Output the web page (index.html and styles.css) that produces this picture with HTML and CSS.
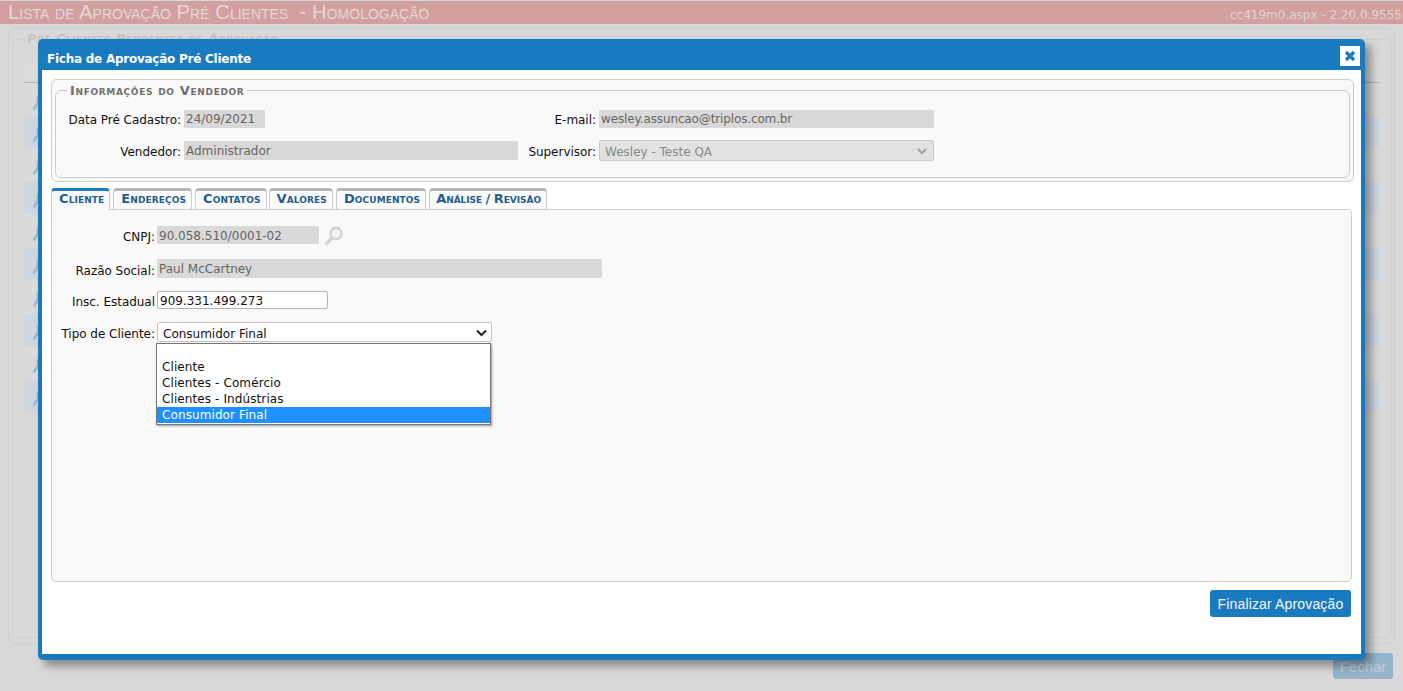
FILE: index.html
```html
<!DOCTYPE html>
<html lang="pt-BR">
<head>
<meta charset="utf-8">
<title>Lista de Aprovação Pré Clientes</title>
<link rel="stylesheet" href="styles.css">
</head>
<body>
<header class="top">
  <h1 class="top-title">Lista de Aprovação Pré Clientes &nbsp;- Homologação</h1>
  <span class="top-ver">cc419m0.aspx - 2.20.0.9555</span>
</header>
<main class="bg">
  <div class="bg-outer">
    <fieldset class="bg-inner">
      <legend class="bg-legend">Pré Clientes Pendentes de Aprovação</legend>
      <div class="bg-head"></div>
      <div class="bg-rows">
        <div class="bg-row"><svg class="wrench" width="16" height="16" viewBox="0 0 16 16"><path d="M1.5 14.5L7 6M6 1v5l4 1" fill="none" stroke="#9dbdd3" stroke-width="2.6"/></svg></div>
        <div class="bg-row alt"><svg class="wrench" width="16" height="16" viewBox="0 0 16 16"><path d="M1.5 14.5L7 6M6 1v5l4 1" fill="none" stroke="#9dbdd3" stroke-width="2.6"/></svg></div>
        <div class="bg-row"><svg class="wrench" width="16" height="16" viewBox="0 0 16 16"><path d="M1.5 14.5L7 6M6 1v5l4 1" fill="none" stroke="#9dbdd3" stroke-width="2.6"/></svg></div>
        <div class="bg-row alt"><svg class="wrench" width="16" height="16" viewBox="0 0 16 16"><path d="M1.5 14.5L7 6M6 1v5l4 1" fill="none" stroke="#9dbdd3" stroke-width="2.6"/></svg></div>
        <div class="bg-row"><svg class="wrench" width="16" height="16" viewBox="0 0 16 16"><path d="M1.5 14.5L7 6M6 1v5l4 1" fill="none" stroke="#9dbdd3" stroke-width="2.6"/></svg></div>
        <div class="bg-row alt"><svg class="wrench" width="16" height="16" viewBox="0 0 16 16"><path d="M1.5 14.5L7 6M6 1v5l4 1" fill="none" stroke="#9dbdd3" stroke-width="2.6"/></svg></div>
        <div class="bg-row"><svg class="wrench" width="16" height="16" viewBox="0 0 16 16"><path d="M1.5 14.5L7 6M6 1v5l4 1" fill="none" stroke="#9dbdd3" stroke-width="2.6"/></svg></div>
        <div class="bg-row alt"><svg class="wrench" width="16" height="16" viewBox="0 0 16 16"><path d="M1.5 14.5L7 6M6 1v5l4 1" fill="none" stroke="#9dbdd3" stroke-width="2.6"/></svg></div>
        <div class="bg-row"><svg class="wrench" width="16" height="16" viewBox="0 0 16 16"><path d="M1.5 14.5L7 6M6 1v5l4 1" fill="none" stroke="#9dbdd3" stroke-width="2.6"/></svg></div>
        <div class="bg-row alt"><svg class="wrench" width="16" height="16" viewBox="0 0 16 16"><path d="M1.5 14.5L7 6M6 1v5l4 1" fill="none" stroke="#9dbdd3" stroke-width="2.6"/></svg></div>
      </div>
    </fieldset>
  </div>
  <div class="bg-foot"><button class="bg-close">Fechar</button></div>
</main>

<section class="modal">
  <div class="modal-bar">
    <span class="modal-title">Ficha de Aprovação Pré Cliente</span>
    <button class="modal-x" aria-label="Fechar">
      <svg width="12" height="12" viewBox="0 0 12 12"><path d="M2 2l8 8M10 2l-8 8" stroke="#1a7abf" stroke-width="3.2"/></svg>
    </button>
  </div>
  <div class="modal-body">
    <div class="vend-box">
      <fieldset class="vend">
        <legend class="vend-legend">Informações do Vendedor</legend>
        <div class="vend-grid">
          <label class="lb lb-a">Data Pré Cadastro:</label>
          <div class="ro ro-date">24/09/2021</div>
          <label class="lb lb-b">E-mail:</label>
          <div class="ro ro-mail">wesley.assuncao@triplos.com.br</div>
          <label class="lb lb-a">Vendedor:</label>
          <div class="ro ro-vend">Administrador</div>
          <label class="lb lb-b">Supervisor:</label>
          <div class="ro-sel">Wesley - Teste QA
            <svg class="chev" width="10" height="7" viewBox="0 0 10 7"><path d="M1 1l4 4 4-4" fill="none" stroke="#a0a0a0" stroke-width="2"/></svg>
          </div>
        </div>
      </fieldset>
    </div>

    <nav class="tabs">
      <span class="tab on">Cliente</span>
      <span class="tab">Endereços</span>
      <span class="tab">Contatos</span>
      <span class="tab tab-val">Valores</span>
      <span class="tab">Documentos</span>
      <span class="tab tab-last">Análise / Revisão</span>
    </nav>
    <div class="panel">
      <div class="row r1">
        <label class="lb lb-c">CNPJ:</label>
        <div class="ro ro-cnpj">90.058.510/0001-02</div>
        <svg class="lupa" width="20" height="20" viewBox="0 0 20 20"><circle cx="12" cy="7.5" r="5.5" fill="#f4f4f4" stroke="#d5d5d5" stroke-width="2.4"/><path d="M8 12l-5.5 5.5" stroke="#d5d5d5" stroke-width="3.4" stroke-linecap="round"/></svg>
      </div>
      <div class="row r2">
        <label class="lb lb-c">Razão Social:</label>
        <div class="ro ro-razao">Paul McCartney</div>
      </div>
      <div class="row r3">
        <label class="lb lb-c">Insc. Estadual</label>
        <div class="inp">909.331.499.273</div>
      </div>
      <div class="row r4">
        <label class="lb lb-c">Tipo de Cliente:</label>
        <div class="sel">Consumidor Final
          <svg class="chev" width="11" height="8" viewBox="0 0 11 8"><path d="M1 1.5l4.5 4.5 4.5-4.5" fill="none" stroke="#222" stroke-width="2"/></svg>
        </div>
        <ul class="drop">
          <li class="opt opt-blank">&nbsp;</li>
          <li class="opt">Cliente</li>
          <li class="opt">Clientes - Comércio</li>
          <li class="opt">Clientes - Indústrias</li>
          <li class="opt opt-on">Consumidor Final</li>
        </ul>
      </div>
    </div>
    <div class="actions"><button class="finish">Finalizar Aprovação</button></div>
  </div>
</section>
</body>
</html>
```
FILE: styles.css
```css
* { box-sizing: border-box; }
html, body { margin: 0; height: 100%; }
body { width: 1403px; height: 691px; overflow: hidden; background: #d9d9d9; position: relative; font-family: "DejaVu Sans", sans-serif; font-size: 12px; color: #111; }

.top { height: 23px; margin-top: 1px; background: #d3a0a0; display: flex; justify-content: space-between; align-items: center; }
.top-title { margin: 0 0 0 8px; font: 400 20.35px "Liberation Sans", sans-serif; font-variant: small-caps; color: #e6d5d5; white-space: pre; }
.top-ver { font: 12px "DejaVu Sans", sans-serif; color: #e3d3d3; margin: 5px 1px 0 0; }

.bg { padding: 4px 8px 0; }
.bg-outer { height: 616px; border: 1px solid #d0d0d0; border-radius: 6px; padding: 3px 2px 5px 3px; }
.bg-inner { margin: 0; height: 100%; min-width: 0; border: 1px solid #d0d0d0; border-radius: 5px; padding: 0 12px; }
.bg-legend { margin-left: 0; padding: 0 2px; font: 700 13px/14px "DejaVu Sans", sans-serif; font-variant: small-caps; letter-spacing: .5px; color: #c4c4c4; }
.bg-head { height: 25px; margin: 12px -1px 0; border-bottom: 1px solid #b5b5b5; background: #dbdbdb; }
.bg-rows { display: flex; flex-direction: column; }
.bg-row { height: 34px; background: #dbdbdb; display: flex; align-items: center; }
.bg-row:first-child { height: 33px; }
.bg-row.alt { height: 32px; background: #cfd8e0; }
.wrench { margin: 6px 0 0 7px; }
.bg-foot { display: flex; justify-content: flex-end; padding: 9px 2px 0 0; }
.bg-close { width: 60px; height: 26px; border: 0; border-radius: 3px; background: #96b5cb; color: #bfd0dc; font: 15px "Liberation Sans", sans-serif; }

.modal { position: absolute; left: 38px; top: 39px; width: 1327px; height: 621px; display: flex; flex-direction: column; background: #1a7abf; border-radius: 5px; padding: 0 4px 6px; box-shadow: 6px 6px 10px rgba(0,0,0,.38); }
.modal-bar { height: 31px; flex: none; display: flex; align-items: center; color: #fff; position: relative; }
.modal-title { font: 700 12px "DejaVu Sans", sans-serif; letter-spacing: -.25px; margin: 9px 0 0 5px; }
.modal-x { position: absolute; right: 1px; top: 7px; width: 20px; height: 20px; padding: 0; border: 0; background: #fff; display: flex; align-items: center; justify-content: center; }
.modal-body { flex: 1; background: #fff; padding: 9px 9px 0; display: flex; flex-direction: column; }

.vend-box { height: 103px; flex: none; margin-right: -2px; border: 1px solid #ccc; border-radius: 6px; background: #f9f9f9; padding: 3px 3px 3px; }
.vend { margin: 0; height: 100%; padding: 0; border: 1px solid #ccc; border-radius: 6px; min-width: 0; }
.vend-legend { margin: 0 0 0 11px; padding: 0 3px; font: 700 13px/15px "DejaVu Sans", sans-serif; font-variant: small-caps; letter-spacing: .65px; color: #6f6f6f; }
.vend-grid { display: grid; grid-template-columns: 128px 334px 81px 335px; grid-template-rows: 18px 21px; row-gap: 12px; margin-top: 12px; align-items: center; }
.lb { text-align: right; padding-right: 3px; white-space: nowrap; font-size: 12px; letter-spacing: -.03px; line-height: 18px; position: relative; top: 1px; }
.ro { height: 18px; background: #d9d9d9; color: #666; padding: 0 2px; white-space: nowrap; line-height: 19px; border-radius: 1px; }
.ro-date { width: 81px; }
.ro-mail { letter-spacing: -.13px; line-height: 18px; }
.ro-vend { height: 19px; line-height: 21px; }
.ro-sel { position: relative; height: 21px; border: 1px solid #ccc; border-radius: 2px; background: #e2e2e2; color: #888; padding-left: 5px; line-height: 22px; }
.chev { position: absolute; right: 6px; top: 7px; }

.tabs { display: flex; gap: 3px; height: 22px; margin-top: 6px; flex: none; align-items: flex-start; }
.tab { height: 22px; padding: 0 5px 0 7px; background: #fbfbfb; border: 1px solid #ccc; border-top: 3px solid #b5b5b5; border-bottom: 0; border-radius: 4px 4px 0 0; font: 700 13px/16px "DejaVu Sans", sans-serif; font-variant: small-caps; color: #245d8c; white-space: nowrap; letter-spacing: .1px; }
.tab-val { margin-left: -1px; }
.tab-last { letter-spacing: -.05px; word-spacing: -1px; padding-left: 6px; }
.tab.on { background: #f9f9f9; border-top-color: #1a7abf; color: #1d5f92; position: relative; z-index: 1; }

.panel { height: 373px; flex: none; margin-top: -1px; border: 1px solid #ccc; border-radius: 0 4px 5px 5px; background: #f9f9f9; padding-top: 16px; }
.row { display: flex; align-items: center; position: relative; }
.row .lb-c { width: 105px; flex: none; padding-right: 2px; top: 2px; }
.r1 { height: 18px; }
.r2 { height: 19px; margin-top: 15px; }
.r3 { height: 18px; margin-top: 13px; }
.r4 { height: 20px; margin-top: 13px; }
.ro-cnpj { width: 162px; line-height: 20px; }
.lupa { margin: 2px 0 0 5px; }
.ro-razao { width: 445px; height: 19px; line-height: 21px; }
.inp { width: 171px; height: 18px; background: #fff; border: 1px solid #b5b5b5; border-radius: 2px; padding-left: 2px; line-height: 18px; }
.sel { width: 335px; height: 20px; background: #fff; border: 1px solid #c4c4c4; border-radius: 2px; padding-left: 5px; line-height: 22px; position: relative; }
.sel .chev { right: 4px; top: 6px; }
.drop { position: absolute; left: 104px; top: 21px; width: 335px; margin: 0; padding: 0 0 1px; list-style: none; background: #fff; border: 1px solid #767676; box-shadow: 1px 1px 2px rgba(0,0,0,.4); letter-spacing: .1px; }
.opt { height: 16px; line-height: 16px; padding-left: 5px; }
.opt-blank { height: 15px; }
.opt-on { background: #1e90ff; color: #fff; }

.actions { display: flex; justify-content: flex-end; margin-top: 8px; margin-right: 1px; }
.finish { width: 141px; height: 27px; border: 0; border-radius: 3px; background: #1a7abf; color: #f4f8fb; font: 14px "Liberation Sans", sans-serif; letter-spacing: .15px; }
```
